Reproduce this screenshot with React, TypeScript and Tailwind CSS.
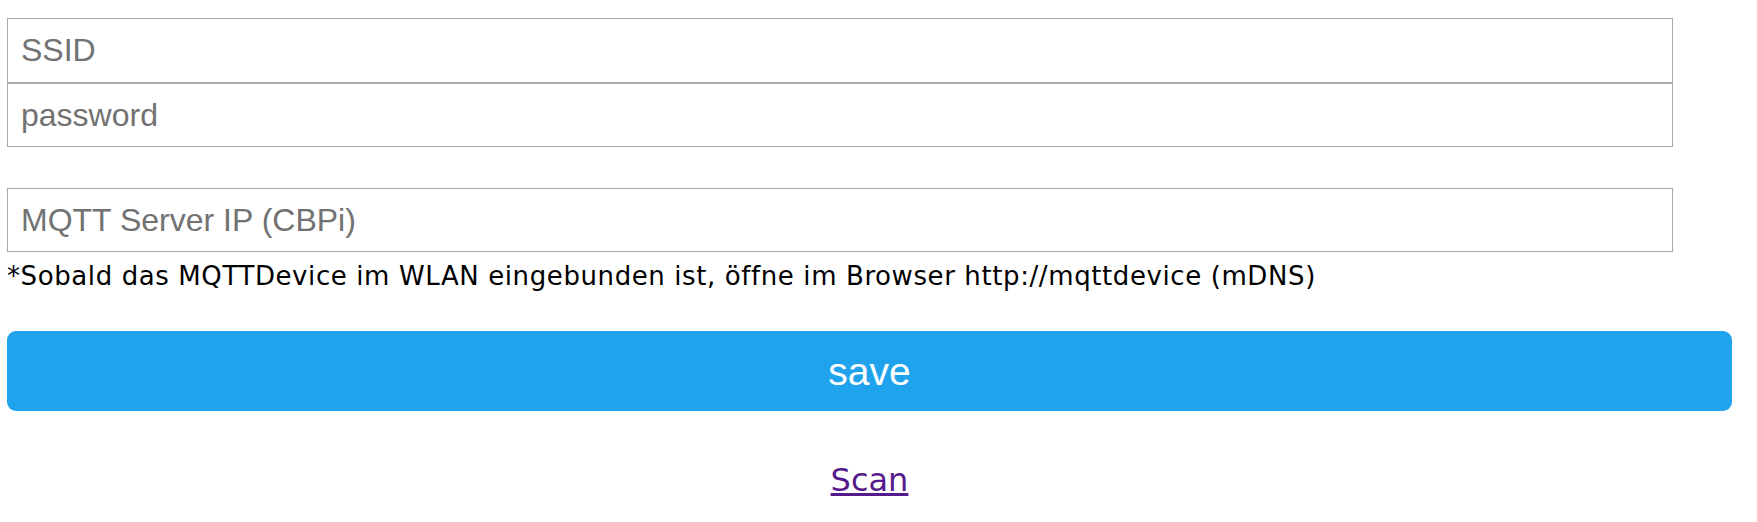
export default function App() {
  return (
    <div className="min-h-[522px] bg-white pl-[7px] pt-[18px]">
      <form className="flex w-[1725px] flex-col" onSubmit={(e) => e.preventDefault()}>
        <input
          id="s"
          placeholder="SSID"
          className="box-border h-[65px] w-[1666px] border border-[#a9a9a9] bg-white px-[13px] font-['Liberation_Sans',Arial,sans-serif] text-[32px] text-black outline-none placeholder:text-[#727272]"
        />
        <input
          id="p"
          type="password"
          placeholder="password"
          className="box-border h-[64px] w-[1666px] border border-[#a9a9a9] bg-white px-[13px] font-['Liberation_Sans',Arial,sans-serif] text-[32px] text-black outline-none placeholder:text-[#727272]"
        />
        <input
          id="mqtt"
          placeholder="MQTT Server IP (CBPi)"
          className="mt-[41px] box-border h-[64px] w-[1666px] border border-[#a9a9a9] bg-white px-[13px] font-['Liberation_Sans',Arial,sans-serif] text-[32px] text-black outline-none placeholder:text-[#727272]"
        />
        {/* ref is Verdana; DejaVu is narrower, so a little tracking */}
        <p className="mt-[9px] font-['DejaVu_Sans',Verdana,sans-serif] text-[26px] leading-[30px] tracking-[0.6px] text-black">
          *Sobald das MQTTDevice im WLAN eingebunden ist, öffne im Browser http://mqttdevice (mDNS)
        </p>
        <button
          type="submit"
          className="mt-[40px] h-[80px] w-[1725px] rounded-[9px] bg-[#1fa3ec] font-['Liberation_Sans',Arial,sans-serif] text-[39px] leading-[45px] text-white"
        >
          save
        </button>
        <div className="mt-[51px] text-center">
          <a
            href="#"
            className="font-['DejaVu_Sans',Verdana,sans-serif] text-[32px] leading-[37px] text-[#551a8b] underline"
          >
            Scan
          </a>
        </div>
      </form>
    </div>
  )
}
